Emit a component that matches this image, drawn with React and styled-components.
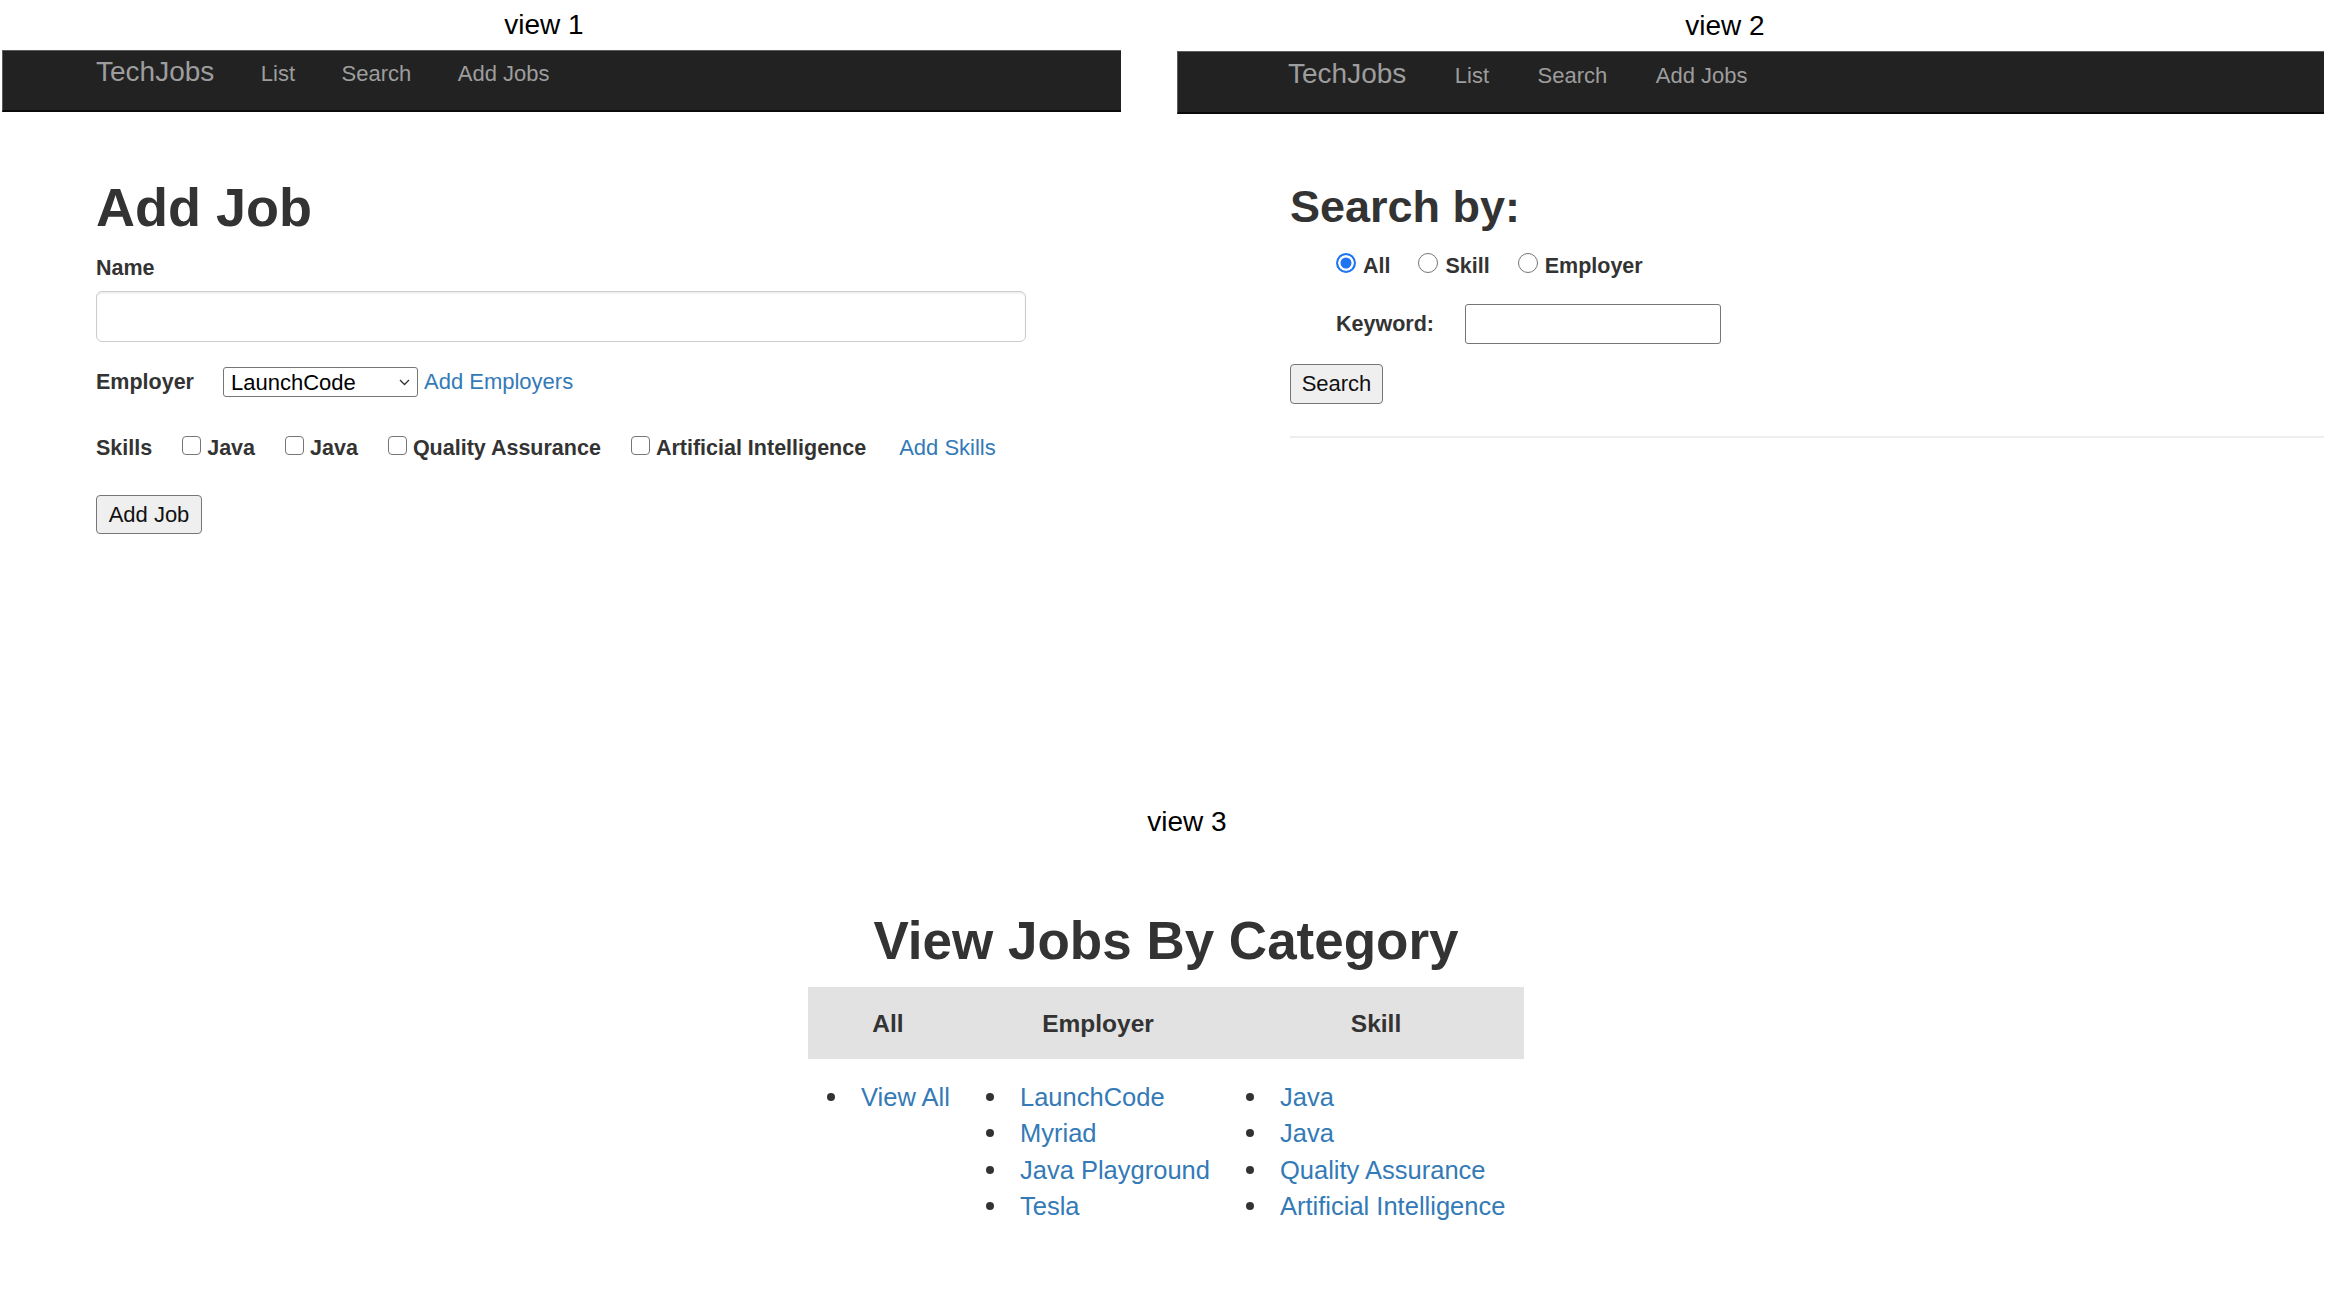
import React from 'react'
import styled, { createGlobalStyle } from 'styled-components'

const GlobalStyle = createGlobalStyle`
  html, body {
    margin: 0;
    padding: 0;
    background: #fff;
  }
  body {
    width: 2348px;
    height: 1306px;
    overflow: hidden;
    font-family: 'Liberation Sans', Arial, Helvetica, sans-serif;
    color: #333;
  }
  * { box-sizing: border-box; }
`

const Page = styled.div`
  display: flex;
  flex-direction: column;
  width: 2348px;
  height: 1306px;
`

const TopRow = styled.div`
  display: flex;
  align-items: flex-start;
  height: 802px;
`

const Panel = styled.section`
  display: flex;
  flex-direction: column;
  width: ${p => p.$width}px;
  margin-left: ${p => p.$left}px;
`

const Caption = styled.div`
  width: ${p => p.$width}px;
  margin-left: ${p => p.$left || 0}px;
  height: ${p => p.$height}px;
  line-height: ${p => p.$height}px;
  text-align: center;
  font-size: 28px;
  color: #000;
`

const Navbar = styled.nav`
  display: flex;
  align-items: baseline;
  gap: ${p => p.$gap}px;
  height: ${p => p.$height}px;
  padding: ${p => p.$top}px 0 0 ${p => p.$indent}px;
  background: #222;
  border-top: 1px solid #5c5c5c;
  border-left: 1px solid #5c5c5c;
  border-bottom: 2px solid #0a0a0a;
`

const Brand = styled.a`
  font-size: 28px;
  line-height: 30px;
  color: #9d9d9d;
  text-decoration: none;
`

const NavLink = styled.a`
  font-size: 22px;
  line-height: 30px;
  color: #9d9d9d;
  text-decoration: none;
`

const Content = styled.div`
  display: flex;
  flex-direction: column;
  align-items: flex-start;
  padding-left: ${p => p.$indent}px;
`

const Heading = styled.h1`
  margin: ${p => p.$top}px 0 0;
  font-size: ${p => p.$size}px;
  line-height: 1.1;
  font-weight: 700;
  color: #333;
  text-align: ${p => p.$align || 'left'};
`

const FieldLabel = styled.label`
  font-size: 21.5px;
  line-height: 30px;
  font-weight: 700;
  color: #333;
`

const NameLabel = styled(FieldLabel)`
  margin-top: 16px;
`

const NameInput = styled.input`
  margin-top: 8px;
  width: 930px;
  height: 51px;
  border: 1px solid #ccc;
  border-radius: 6px;
  box-shadow: inset 0 1.5px 1.5px rgba(0, 0, 0, 0.075);
  background: #fff;
`

const Row = styled.div`
  display: flex;
  align-items: center;
  gap: ${p => p.$gap || 0}px;
  height: ${p => p.$height}px;
  margin-top: ${p => p.$top}px;
  padding-left: ${p => p.$indent || 0}px;
`

const SelectWrap = styled.span`
  position: relative;
  display: inline-flex;
  margin-left: 29px;
`

const Select = styled.select`
  appearance: none;
  width: 195px;
  height: 30px;
  padding: 0 0 0 7px;
  font: 22px 'Liberation Sans', Arial, sans-serif;
  color: #000;
  background: #fff;
  border: 1px solid #767676;
  border-radius: 3px;
`

const Chevron = styled.svg`
  position: absolute;
  right: 8px;
  top: 12px;
  pointer-events: none;
`

const TextLink = styled.a`
  margin-left: ${p => p.$left || 0}px;
  font-size: 22px;
  line-height: 30px;
  color: #337ab7;
  text-decoration: none;
`

const CheckLabel = styled.label`
  display: flex;
  align-items: center;
  font-size: 21.5px;
  line-height: 30px;
  font-weight: 700;
  color: #333;
`

const Check = styled.input.attrs({ type: 'checkbox' })`
  appearance: none;
  flex-shrink: 0;
  width: 19px;
  height: 19px;
  margin: 0 6px 5px 0;
  border: 1px solid #767676;
  border-radius: 4px;
  background: #fff;
`

const Radio = styled.input.attrs({ type: 'radio' })`
  appearance: none;
  flex-shrink: 0;
  width: 20px;
  height: 20px;
  margin: 0 7px 6px 0;
  border: 1px solid #767676;
  border-radius: 50%;
  background: #fff;

  &:checked {
    border: 2px solid #1f74f0;
    background: #1f74f0;
    box-shadow: inset 0 0 0 2.5px #fff;
  }
`

const Button = styled.button`
  margin-top: ${p => p.$top}px;
  width: ${p => p.$width}px;
  height: ${p => p.$height}px;
  padding: 0;
  font: 22px 'Liberation Sans', Arial, sans-serif;
  color: #111;
  background: #efefef;
  border: 1px solid #767676;
  border-radius: 4px;
`

const KeywordInput = styled.input`
  margin-left: 31px;
  width: 256px;
  height: 40px;
  border: 1px solid #767676;
  border-radius: 3px;
  background: #fff;
`

const Divider = styled.hr`
  width: 1034px;
  margin: 32px 0 0;
  border: 0;
  border-top: 2px solid #eee;
`

const Category = styled.section`
  display: flex;
  flex-direction: column;
  width: 716px;
  margin-left: 808px;
`

const CategoryTable = styled.table`
  width: 716px;
  margin-top: 17px;
  border-collapse: collapse;
  table-layout: fixed;
`

const HeadCell = styled.th`
  width: ${p => p.$width}px;
  height: 72px;
  padding: 2px 0 0;
  background: #e2e2e2;
  font-size: 24.5px;
  font-weight: 700;
  color: #333;
  text-align: center;
`

const BodyCell = styled.td`
  vertical-align: top;
  padding: 19.5px 0 0;
`

const LinkList = styled.ul`
  list-style: none;
  margin: 0;
  padding: 0;
`

const LinkItem = styled.li`
  display: flex;
  align-items: center;
  height: 36.3px;
  line-height: 36px;
  font-size: 25.5px;

  &::before {
    content: '';
    flex-shrink: 0;
    width: 8px;
    height: 8px;
    margin: 0 26px 0 ${p => p.$indent}px;
    border-radius: 50%;
    background: #333;
  }

  a {
    color: #337ab7;
    text-decoration: none;
  }
`

const navItems = ['List', 'Search', 'Add Jobs']
const skills = ['Java', 'Java', 'Quality Assurance', 'Artificial Intelligence']
const employers = ['LaunchCode', 'Myriad', 'Java Playground', 'Tesla']

function TopNav({ gap, height, top, indent }) {
  return (
    <Navbar $gap={gap} $height={height} $top={top} $indent={indent}>
      <Brand href='#'>TechJobs</Brand>
      {navItems.map(item => <NavLink key={item} href='#'>{item}</NavLink>)}
    </Navbar>
  )
}

function AddJobView() {
  return (
    <Panel $left={2} $width={1119}>
      <Caption $width={1084} $height={50}>view 1</Caption>
      <TopNav gap={46.5} height={62} top={6} indent={93} />
      <Content $indent={94}>
        <Heading $top={66} $size={54}>Add Job</Heading>
        <NameLabel>Name</NameLabel>
        <NameInput />
        <Row $top={25} $height={30}>
          <FieldLabel>Employer</FieldLabel>
          <SelectWrap>
            <Select defaultValue='LaunchCode'>
              <option>LaunchCode</option>
              <option>Myriad</option>
              <option>Java Playground</option>
              <option>Tesla</option>
            </Select>
            <Chevron width='11' height='7' viewBox='0 0 11 7'>
              <polyline points='1,1 5.5,5.5 10,1' fill='none' stroke='#333' strokeWidth='1.3' />
            </Chevron>
          </SelectWrap>
          <TextLink href='#' $left={6}>Add Employers</TextLink>
        </Row>
        <Row $top={36} $height={30} $gap={30}>
          <FieldLabel>Skills</FieldLabel>
          {skills.map((skill, i) => (
            <CheckLabel key={i}>
              <Check />
              {skill}
            </CheckLabel>
          ))}
          <TextLink href='#' $left={3}>Add Skills</TextLink>
        </Row>
        <Button $top={32} $width={106} $height={39}>Add Job</Button>
      </Content>
    </Panel>
  )
}

function SearchView() {
  return (
    <Panel $left={56} $width={1147}>
      <Caption $width={1096} $height={51}>view 2</Caption>
      <TopNav gap={48.5} height={63} top={7} indent={110} />
      <Content $indent={113}>
        <Heading as='h2' $top={68} $size={45}>Search by:</Heading>
        <Row $top={19} $height={30} $gap={28} $indent={46}>
          <CheckLabel><Radio name='searchType' defaultChecked />All</CheckLabel>
          <CheckLabel><Radio name='searchType' />Skill</CheckLabel>
          <CheckLabel><Radio name='searchType' />Employer</CheckLabel>
        </Row>
        <Row $top={23} $height={40} $indent={46}>
          <FieldLabel>Keyword:</FieldLabel>
          <KeywordInput />
        </Row>
        <Button $top={20} $width={93} $height={40}>Search</Button>
        <Divider />
      </Content>
    </Panel>
  )
}

function CategoryView() {
  return (
    <>
      <Caption $left={26} $width={2322} $height={40}>view 3</Caption>
      <Category>
        <Heading $top={70} $size={53} $align='center'>View Jobs By Category</Heading>
        <CategoryTable>
          <thead>
            <tr>
              <HeadCell $width={160}>All</HeadCell>
              <HeadCell $width={260}>Employer</HeadCell>
              <HeadCell $width={296}>Skill</HeadCell>
            </tr>
          </thead>
          <tbody>
            <tr>
              <BodyCell>
                <LinkList>
                  <LinkItem $indent={19}><a href='#'>View All</a></LinkItem>
                </LinkList>
              </BodyCell>
              <BodyCell>
                <LinkList>
                  {employers.map(name => <LinkItem key={name} $indent={18}><a href='#'>{name}</a></LinkItem>)}
                </LinkList>
              </BodyCell>
              <BodyCell>
                <LinkList>
                  {skills.map((name, i) => <LinkItem key={i} $indent={18}><a href='#'>{name}</a></LinkItem>)}
                </LinkList>
              </BodyCell>
            </tr>
          </tbody>
        </CategoryTable>
      </Category>
    </>
  )
}

export default function App() {
  return (
    <Page>
      <GlobalStyle />
      <TopRow>
        <AddJobView />
        <SearchView />
      </TopRow>
      <CategoryView />
    </Page>
  )
}
